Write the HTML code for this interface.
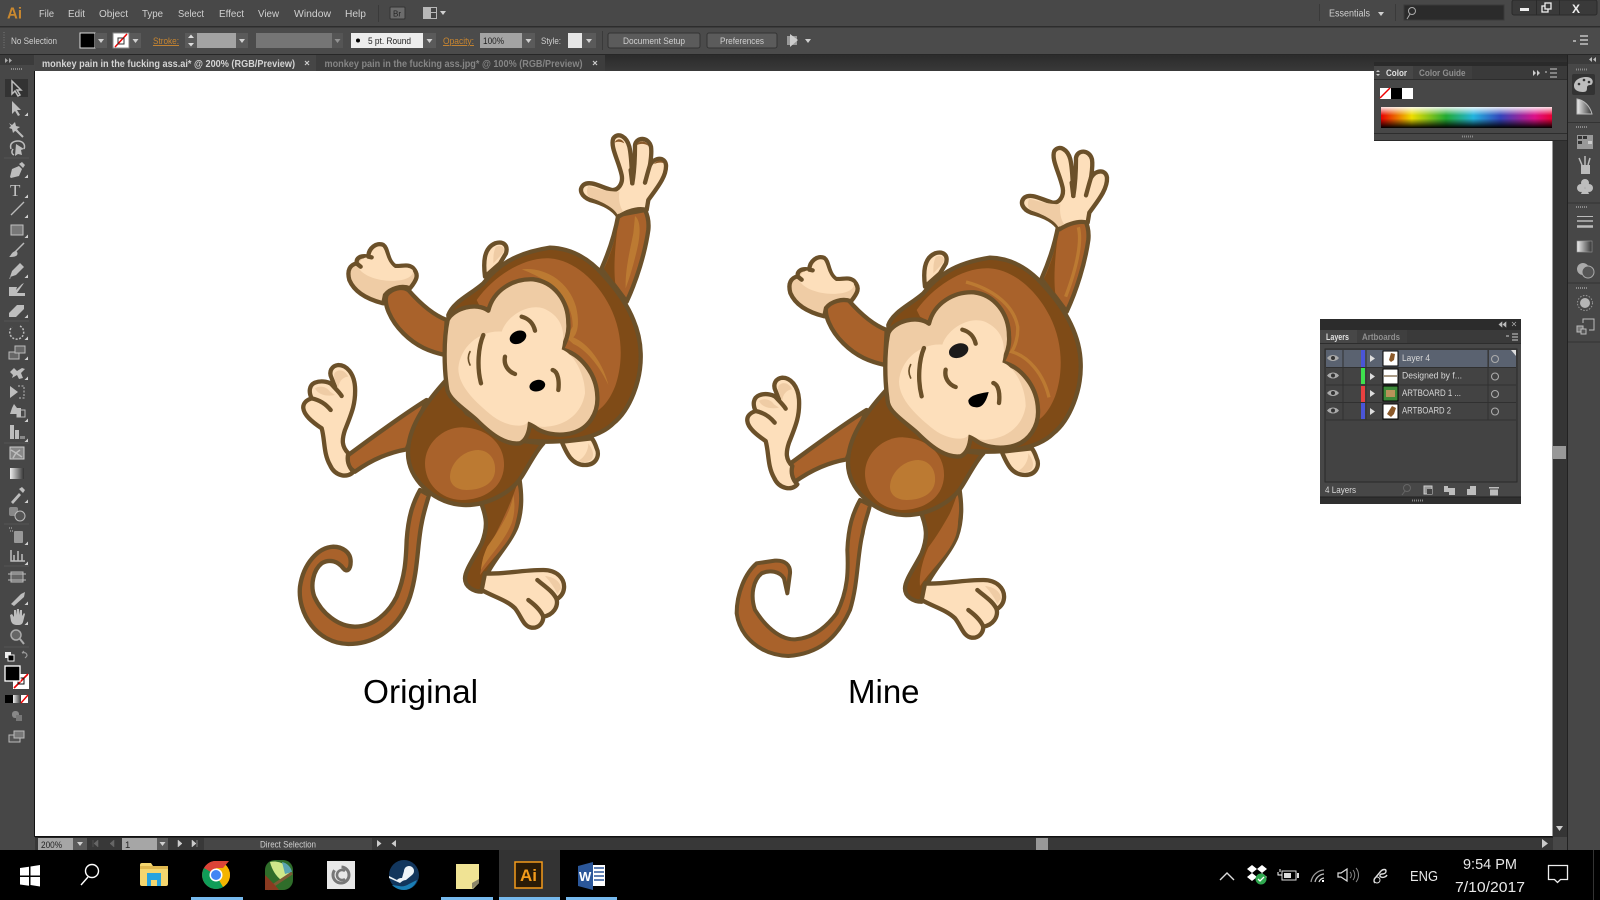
<!DOCTYPE html>
<html lang="en"><head><meta charset="utf-8"><title>Illustrator</title>
<style>
html,body{margin:0;padding:0;background:#000;width:1600px;height:900px;overflow:hidden}
svg{display:block}
text{font-family:"Liberation Sans",sans-serif}
.m{font-size:10.5px;fill:#d0d0d0}
.c{font-size:9.5px;fill:#cfcfcf}
.o{font-size:9.5px;fill:#c98630;text-decoration:underline}
.k{font-size:9.5px;fill:#222}
.l{font-size:9.5px;fill:#d8d8d8}
.i{fill:#bdbdbd}
.s{fill:none;stroke:#bdbdbd;stroke-width:1.5}
.w{font-size:15px;fill:#e8e8e8}
</style></head><body>
<svg width="1600" height="900" viewBox="0 0 1600 900" xmlns="http://www.w3.org/2000/svg">
<defs>
<linearGradient id="sp" x1="0" x2="1" y1="0" y2="0">
<stop offset="0" stop-color="#e80000"/><stop offset=".18" stop-color="#eedd00"/><stop offset=".38" stop-color="#22aa33"/><stop offset=".54" stop-color="#22b4de"/><stop offset=".7" stop-color="#3344bb"/><stop offset=".9" stop-color="#dd1188"/><stop offset="1" stop-color="#e80033"/>
</linearGradient>
<linearGradient id="sv" x1="0" x2="0" y1="0" y2="1">
<stop offset="0" stop-color="#fff" stop-opacity=".9"/><stop offset=".4" stop-color="#fff" stop-opacity="0"/><stop offset=".55" stop-color="#000" stop-opacity="0"/><stop offset="1" stop-color="#000" stop-opacity="1"/>
</linearGradient>
<linearGradient id="gr" x1="0" x2="1" y1="0" y2="0"><stop offset="0" stop-color="#eee"/><stop offset="1" stop-color="#333"/></linearGradient>
<linearGradient id="tb" x1="0" x2="0" y1="0" y2="1"><stop offset="0" stop-color="#2b2b2b"/><stop offset="1" stop-color="#393939"/></linearGradient>
<path id="ct" d="M0 0h-3.5l3.5-3.5z" fill="#d0d0d0"/>
<path id="dd" d="M-3-2h6l-3 4z" fill="#d0d0d0"/>
<g id="grip"><path d="M0 0h12" stroke="#8a8a8a" stroke-width="2" stroke-dasharray="1 1"/></g>

<g id="mback" stroke="#6b5029" stroke-width="13" stroke-linejoin="round" stroke-linecap="round">
 <g transform="translate(0,840)">
  <path fill="#7f4b17" d="M600 300C620 350 625 380 605 430C585 470 555 510 555 535C555 560 580 575 605 575L620 525C640 480 690 430 710 380C728 330 725 280 718 235Z"/>
  <path stroke="none" fill="#a9622b" d="M712 250C690 320 650 400 610 470L600 525C640 470 690 430 705 375C720 320 720 280 712 250Z"/>
  <path fill="#fddfbb" d="M615 520C660 525 720 510 790 510C830 510 855 535 852 565C850 585 835 595 830 598C835 620 820 645 790 650C790 670 775 685 755 683C730 680 725 650 705 625C680 600 640 590 605 570Z"/>
  <path stroke="none" fill="#efcca5" d="M795 528C820 530 842 545 843 565L832 582C822 560 810 545 795 528Z"/>
  <path fill="none" d="M772 540C795 560 820 575 830 598M745 600C765 615 782 630 790 650"/>
  <path fill="#fddfbb" d="M845 125C860 160 875 195 915 195C950 195 960 165 950 145C945 130 940 120 935 115Z"/>
  <path stroke="none" fill="#efcca5" d="M925 130C935 145 945 160 935 178C925 188 905 188 895 182C910 175 925 155 925 130Z"/>
  <path fill="#a9622b" d="M440 0C360 50 280 110 205 165C198 185 205 205 225 215C260 190 310 160 380 148Z"/>
 </g>
 <path fill="#a9622b" d="M1015 285C1005 340 985 400 965 445L1040 545C1070 480 1095 400 1105 330C1108 300 1100 280 1095 270Z"/>
 <path stroke="none" fill="#7f4b17" d="M1016 295C1010 350 990 410 972 446L1006 492C1000 440 1005 380 1016 295Z"/>
 <path fill="#a9622b" d="M320 525C310 550 330 600 370 640C410 680 450 695 495 705L500 600C460 585 420 550 385 510C365 498 335 505 320 525Z"/>
 <path fill="#fddfbb" d="M615 470C610 430 610 385 645 370C670 362 685 375 678 400L660 430Z"/>
 <path stroke="none" fill="#efcca5" d="M648 380C665 374 676 382 670 398L640 430C640 410 640 395 648 380Z"/>
 <g transform="translate(0,840)">
  <path fill="#7f4b17" d="M497 -58C440 5 375 90 385 175C395 250 470 310 550 315C630 318 700 270 725 230C750 190 770 150 790 130L700 120L560 40Z"/>
  <path stroke="none" fill="#a9622b" d="M435 190C435 130 490 80 550 82C620 85 675 130 672 200C668 265 610 300 545 300C480 298 435 250 435 190Z"/>
  <path stroke="none" fill="#bc7a32" d="M510 230C510 190 550 150 595 150C630 152 648 180 645 215C640 255 600 270 560 270C530 270 510 255 510 230Z"/>
 </g>
 <path fill="#7f4b17" d="M505 585C520 545 570 525 610 490C650 440 700 400 810 383C880 385 930 420 970 465C1030 530 1080 610 1082 700C1085 780 1050 870 1000 910C960 950 890 965 800 965L700 960L520 800Z"/>
 <path stroke="none" fill="#a9622b" d="M590 540C640 470 730 410 810 415C880 420 950 480 990 560C1030 640 1030 730 1005 800C985 850 960 870 940 880L850 690L600 560Z"/>
</g>

<g id="hRaised" stroke="#6b5029" stroke-width="13" stroke-linejoin="round" stroke-linecap="round">
 <path fill="#fddfbb" d="M1015 290C1000 265 970 250 930 240C905 230 895 210 910 195C930 180 960 200 995 210C1015 212 1030 190 1025 165C1015 120 990 80 1000 55C1015 35 1040 50 1048 80C1055 110 1055 150 1057 190C1062 160 1065 110 1065 75C1070 50 1105 50 1113 80C1116 100 1112 120 1110 135C1125 110 1155 110 1158 135C1160 170 1130 205 1105 240L1100 270C1070 262 1040 275 1015 290Z"/>
 <path stroke="none" fill="#efcca5" d="M925 198C950 205 980 215 1018 215C1015 240 1020 262 1030 275L1012 283C1000 262 965 245 930 233C920 225 918 212 925 198Z"/>
 <path fill="none" d="M1057 190L1052 150M1095 188C1100 170 1105 150 1110 135"/>
</g>
<g id="hLower" stroke="#6b5029" stroke-width="13" stroke-linejoin="round" stroke-linecap="round">
 <path fill="#fddfbb" d="M205 1000C185 980 185 960 195 930C215 880 228 850 225 800C222 760 200 735 175 735C155 737 145 755 155 775L165 800C150 785 125 780 105 788C88 795 85 815 95 835C80 840 68 850 70 865C72 885 95 905 125 925C135 960 130 1000 150 1035C165 1070 205 1075 220 1055C205 1040 200 1020 205 1000Z"/>
 <path stroke="none" fill="#efcca5" d="M163 760C175 745 195 750 205 770C190 770 175 785 175 805C168 790 160 775 163 760ZM105 805C120 795 140 800 150 815L165 825C140 830 115 825 105 805Z"/>
 <path fill="none" d="M152 790C165 805 178 816 185 828M95 835C120 840 140 855 152 870"/>
</g>
<g id="hUpper" stroke="#6b5029" stroke-width="13" stroke-linejoin="round" stroke-linecap="round">
 <path fill="#efcca5" d="M310 550C270 540 225 520 208 480C200 450 210 435 230 430C228 415 240 405 265 410C265 385 290 365 310 375C325 385 320 420 345 438C365 440 385 430 400 445C418 465 410 480 390 505C365 495 330 505 315 525Z"/>
 <path stroke="none" fill="#fddfbb" d="M236 444C250 470 310 490 365 480C390 475 402 462 398 450C385 438 365 445 345 444C318 425 320 395 308 381C290 375 272 390 272 412C250 410 236 420 236 444Z"/>
 <path fill="none" d="M232 432L242 440M265 410L275 412"/>
</g>

<g id="mfront" stroke="#6b5029" stroke-width="13" stroke-linejoin="round" stroke-linecap="round">
 <path fill="#efcca5" d="M625 572C640 510 700 475 760 478C820 485 865 540 865 610C868 640 855 670 845 688C900 700 950 760 952 830C955 880 925 925 880 938C840 950 780 945 750 908C748 935 740 960 720 970C680 975 640 950 590 900C550 865 510 840 502 810C492 750 490 660 503 600C520 565 590 545 625 572Z"/>
 <path stroke="none" fill="#fddfbb" d="M535 745C540 680 600 630 665 635C680 590 740 550 790 565C840 585 860 630 845 688C880 700 915 760 915 820C905 880 860 915 800 920C770 925 755 905 744 905C735 925 680 920 640 890C590 850 535 800 535 745Z"/>
 <path fill="none" d="M725 590C745 595 760 610 765 632M610 645C595 680 590 740 603 790M675 710C670 735 685 755 705 762M818 750C835 755 838 785 835 810"/>
 <path fill="none" stroke-width="5" d="M570 695C562 710 565 725 570 735"/>
</g>
</defs>

<!-- base chrome -->
<rect width="1600" height="850" fill="#474747"/>
<rect x="0" y="0" width="1600" height="26" fill="#484848"/>
<rect x="0" y="26" width="1600" height="1.5" fill="#2d2d2d"/>
<rect x="0" y="27.5" width="1600" height="26.5" fill="#4b4b4b"/>
<rect x="0" y="54" width="1600" height="1" fill="#272727"/>
<rect x="35" y="55" width="1533" height="16" fill="url(#tb)"/>
<rect x="0" y="55" width="34" height="10" fill="#3b3b3b"/>
<rect x="1568" y="55" width="32" height="10" fill="#3b3b3b"/>

<!-- menu -->
<text x="7" y="18.500" textLength="15" lengthAdjust="spacingAndGlyphs" style="font-size:16px;font-weight:bold;fill:#c9882f">Ai</text>
<g class="m">
<text class="m" x="39" y="17" textLength="15" lengthAdjust="spacingAndGlyphs">File</text>
<text class="m" x="68" y="17" textLength="17" lengthAdjust="spacingAndGlyphs">Edit</text>
<text class="m" x="99" y="17" textLength="29" lengthAdjust="spacingAndGlyphs">Object</text>
<text class="m" x="142" y="17" textLength="21" lengthAdjust="spacingAndGlyphs">Type</text>
<text class="m" x="178" y="17" textLength="26" lengthAdjust="spacingAndGlyphs">Select</text>
<text class="m" x="219" y="17" textLength="25" lengthAdjust="spacingAndGlyphs">Effect</text>
<text class="m" x="258" y="17" textLength="21" lengthAdjust="spacingAndGlyphs">View</text>
<text class="m" x="294" y="17" textLength="37" lengthAdjust="spacingAndGlyphs">Window</text>
<text class="m" x="345" y="17" textLength="21" lengthAdjust="spacingAndGlyphs">Help</text>
</g>
<rect x="378" y="5" width="1" height="17" fill="#3a3a3a"/>
<rect x="390" y="7" width="15" height="12" rx="1" fill="#6c6c6c" stroke="#333"/><text x="393" y="16.500" style="font-size:8px;fill:#222">Br</text>
<rect x="423" y="7" width="14" height="12" fill="#b8b8b8"/><rect x="431" y="8" width="5" height="4" fill="#444"/><rect x="431" y="13" width="5" height="5" fill="#444"/><use href="#dd" x="443" y="13"/>
<rect x="1319" y="4" width="1" height="17" fill="#3a3a3a"/><text class="m" x="1329" y="16.500" textLength="41" lengthAdjust="spacingAndGlyphs">Essentials</text><use href="#dd" x="1381" y="14"/><rect x="1395" y="4" width="1" height="17" fill="#3a3a3a"/>
<rect x="1404" y="5" width="100" height="15" fill="#2b2b2b" stroke="#3a3a3a"/>
<circle cx="1412" cy="11" r="3.500" fill="none" stroke="#aaa"/><path d="M1410 14l-3 5" stroke="#aaa"/>
<rect x="1512" y="0" width="85" height="15" rx="2" fill="#3a3a3a" stroke="#2a2a2a"/>
<rect x="1536" y="0" width="1" height="15" fill="#2a2a2a"/><rect x="1559" y="0" width="1" height="15" fill="#2a2a2a"/>
<rect x="1520" y="8" width="9" height="3" fill="#eee"/>
<rect x="1542" y="6" width="6" height="6" fill="none" stroke="#eee" stroke-width="1.300"/><rect x="1545" y="3" width="6" height="6" fill="#3a3a3a" stroke="#eee" stroke-width="1.300"/>
<text x="1572" y="13" style="font-size:12px;font-weight:bold;fill:#eee">X</text>

<!-- control bar -->
<path d="M4 32v16" stroke="#777" stroke-dasharray="1 1.500"/>
<text class="c" x="11" y="44" textLength="46" lengthAdjust="spacingAndGlyphs">No Selection</text>
<rect x="80" y="33" width="15" height="15" fill="#000" stroke="#ddd"/>
<rect x="95" y="33" width="12" height="15" fill="#5a5a5a"/><use href="#dd" x="101" y="41"/>
<rect x="113" y="33" width="16" height="15" fill="#fff" stroke="#888"/><path d="M115 47l12-13" stroke="#e00" stroke-width="1.500"/><rect x="118" y="38" width="6" height="6" fill="none" stroke="#333"/>
<rect x="130" y="33" width="11" height="15" fill="#5a5a5a"/><use href="#dd" x="135.500" y="41"/>
<text class="o" x="153" y="44" textLength="26" lengthAdjust="spacingAndGlyphs">Stroke:</text>
<rect x="185" y="33" width="12" height="15" fill="#5a5a5a"/><path d="M191 34.500l-3 3.500h6zM191 46.500l-3-3.500h6z" fill="#ddd"/>
<rect x="197" y="33" width="39" height="15" fill="#a3a3a3"/><rect x="236" y="33" width="12" height="15" fill="#5a5a5a"/><use href="#dd" x="242" y="41"/>
<rect x="256" y="33" width="76" height="15" fill="#757575"/><rect x="332" y="33" width="11" height="15" fill="#555"/><use href="#dd" x="337.500" y="41" opacity=".5"/>
<rect x="351" y="33" width="72" height="15" fill="#ececec"/><circle cx="358" cy="40.500" r="2" fill="#000"/><text class="k" x="368" y="44" textLength="43" lengthAdjust="spacingAndGlyphs">5 pt. Round</text>
<rect x="423" y="33" width="13" height="15" fill="#5a5a5a"/><use href="#dd" x="429.500" y="41"/>
<text class="o" x="443" y="44" textLength="31" lengthAdjust="spacingAndGlyphs">Opacity:</text>
<rect x="480" y="33" width="42" height="15" fill="#a3a3a3"/><text class="k" x="483" y="44" textLength="21" lengthAdjust="spacingAndGlyphs">100%</text>
<rect x="522" y="33" width="13" height="15" fill="#5a5a5a"/><use href="#dd" x="528.500" y="41"/>
<text class="c" x="541" y="44" textLength="20" lengthAdjust="spacingAndGlyphs">Style:</text>
<rect x="568" y="33" width="14" height="15" fill="#e6e6e6"/><rect x="582" y="33" width="14" height="15" fill="#5a5a5a"/><use href="#dd" x="589" y="41"/>
<rect x="602" y="31" width="1" height="19" fill="#3a3a3a"/>
<rect x="608" y="33" width="92" height="15" rx="2" fill="#5b5b5b" stroke="#333"/><text class="c" x="623" y="44" textLength="62" lengthAdjust="spacingAndGlyphs">Document Setup</text>
<rect x="707" y="33" width="70" height="15" rx="2" fill="#5b5b5b" stroke="#333"/><text class="c" x="720" y="44" textLength="44" lengthAdjust="spacingAndGlyphs">Preferences</text>
<rect x="787" y="36" width="10" height="9" fill="#999"/><path d="M790 34l8 6-8 7z" fill="#ccc"/><use href="#dd" x="808" y="41"/>
<path d="M1576 41h-3M1580 36h8M1580 40h8M1580 44h8" stroke="#ddd" stroke-width="1.300"/>

<!-- tabs -->
<rect x="35" y="55" width="281" height="16" fill="#464646"/>
<rect x="316" y="55" width="289" height="16" fill="#3d3d3d"/>
<text x="42" y="67" textLength="253" lengthAdjust="spacingAndGlyphs" style="font-size:10.500px;font-weight:bold;fill:#d4d4d4">monkey pain in the fucking ass.ai* @ 200% (RGB/Preview)</text>
<text x="324.500" y="67" textLength="258" lengthAdjust="spacingAndGlyphs" style="font-size:10.500px;font-weight:bold;fill:#858585">monkey pain in the fucking ass.jpg* @ 100% (RGB/Preview)</text>
<path d="M305 61l4 4m0-4l-4 4M593 61l4 4m0-4l-4 4" stroke="#ccc" stroke-width="1.200"/>
<path d="M5 58l3 2.500-3 2.500zM9 58l3 2.500-3 2.500z" fill="#aaa"/>

<!-- canvas -->
<rect x="34" y="71" width="1" height="766" fill="#111"/>
<rect x="35" y="71" width="1517.500" height="765" fill="#fff"/>
<rect x="35" y="836" width="1518" height="1.500" fill="#111"/>

<!-- monkey 1 -->
<g transform="translate(280,120) scale(.33333)">
 <g transform="translate(0,840)" stroke="#6b5029" stroke-width="13" stroke-linejoin="round">
  <path fill="#a9622b" d="M420 270C398 310 385 350 380 420C378 480 375 530 350 590C325 640 280 680 225 680C175 680 125 640 103 590C90 555 100 510 125 490C150 475 175 485 190 505C200 518 212 510 212 485C212 455 185 440 160 440C115 442 70 490 60 560C52 640 110 730 205 732C290 732 360 680 390 590C415 510 412 430 425 370C430 340 440 310 447 285Z"/>
 </g>
 <use href="#mback"/>
 <use href="#hRaised"/><use href="#hLower"/><use href="#hUpper"/>
 <path fill="#8a5a2a" d="M1004 68C1010 54 1026 54 1033 70C1022 64 1012 64 1004 68ZM1070 76C1076 60 1098 60 1106 78C1094 70 1080 70 1070 76ZM1122 132C1130 120 1146 118 1152 130C1142 126 1132 128 1122 132Z"/>
 <path fill="#bc7a32" d="M1065 288C1080 300 1082 330 1075 370C1065 420 1050 470 1037 505C1035 450 1050 390 1060 340Z"/>
 <path fill="#bc7a32" d="M725 448C790 440 865 480 888 560C900 610 892 640 880 652C925 670 970 730 985 795C960 740 920 690 880 672L858 652L878 620C880 560 840 490 725 448Z"/>
 <path fill="#bc7a32" transform="translate(0,840)" d="M700 285C692 340 650 400 622 440C610 465 605 490 603 510C625 470 670 430 695 370C705 340 705 310 700 285Z"/>
 <use href="#mfront"/>
 <ellipse cx="714" cy="652" rx="26" ry="19" transform="rotate(-25 714 652)" fill="#000"/>
 <ellipse cx="772" cy="797" rx="24" ry="17" transform="rotate(-15 772 797)" fill="#000"/>
</g>

<!-- monkey 2 -->
<g transform="translate(720,130) scale(.33333)">
 <g transform="translate(0,840)" stroke="#6b5029" stroke-width="12" stroke-linejoin="round">
  <path fill="#a9622b" d="M420 270C398 310 385 350 382 420C385 480 385 540 350 610C320 650 280 685 225 688C175 690 130 640 105 600C90 555 100 510 125 490C150 478 180 485 192 505L202 550L210 490C212 465 195 450 165 452L110 460C75 490 50 550 50 610C60 680 120 735 205 738C290 732 350 690 390 600C415 520 412 430 428 370C432 340 445 310 450 285Z"/>
 </g>
 <use href="#mback"/>
 <path fill="#a9622b" transform="translate(0,840)" d="M703 285C680 330 650 380 625 412C612 440 596 490 600 528C640 470 690 430 708 375C718 340 716 305 703 285Z"/>
 <g transform="translate(3,8)"><use href="#hRaised"/></g>
 <g transform="translate(12,8)"><use href="#hLower"/></g>
 <g transform="translate(3,9)"><use href="#hUpper"/></g>
 <path fill="none" stroke="#bc7a32" stroke-width="10" d="M1075 292C1085 330 1075 400 1037 500"/>
 <path fill="none" stroke="#bc7a32" stroke-width="10" d="M738 456C810 475 880 520 893 590C895 620 885 650 875 665C925 680 970 730 987 802"/>
 <g transform="translate(2,9)"><use href="#mfront"/></g>
 <ellipse cx="716" cy="662" rx="30" ry="21" transform="rotate(-20 716 662)" fill="#1c1a1a"/>
 <path d="M745 812C750 795 780 790 806 786C800 810 790 832 770 832C755 832 745 825 745 812Z" fill="#000"/>
</g>

<text x="363" y="703" style="font-size:33.400px;fill:#000">Original</text>
<text x="848" y="703" style="font-size:33px;fill:#000">Mine</text>

<!-- tools -->
<path d="M11 69h12" stroke="#8a8a8a" stroke-width="2" stroke-dasharray="1 1"/>
<rect x="5" y="79" width="23" height="18" fill="#333"/>
<g fill="none" stroke="#555">
<path d="M4 158h25M4 321h25M4 443h25M4 524h25M4 566h25M4 647h25"/>
</g>
<path class="s" d="M12 81v13l3-3 3 5 2-1-3-5h4z"/>
<path class="i" d="M12 101v13l3-3 3 5 2-1-3-5h4z"/><use href="#ct" x="28" y="116"/>
<path class="i" d="M9 123l3 2 3-3 1 4 4 1-3 2 2 3-4-1-2 2-1-4-3-1 2-2z"/><path d="M16 130l7 7" stroke="#bbb" stroke-width="2"/>
<path class="s" d="M11 149c-2-6 3-8 7-8s8 3 6 8"/><path class="i" d="M16 144l8 5-3 1 1 5-4-1-3 2z"/><path d="M13 149c-2 3-1 5 1 6" class="s"/>
<path class="i" d="M10 177l2-8 7-3 3 3-3 7-8 2zM19 164l3-2 3 3-2 3z"/><use href="#ct" x="28" y="178"/>
<text x="10" y="196" style="font-family:'Liberation Serif',serif;font-size:17px;fill:#c4c4c4">T</text><use href="#ct" x="28" y="198"/>
<path d="M11 215l13-13" stroke="#bbb" stroke-width="1.300"/><use href="#ct" x="28" y="218"/>
<rect x="11" y="225" width="12" height="10" fill="#777" stroke="#c0c0c0"/><use href="#ct" x="28" y="238"/>
<path d="M24 243l-9 9" stroke="#bbb" stroke-width="1.500"/><path class="i" d="M16 251c2 1 2 4 0 5-2 1-5 1-7 1 2-1 2-5 7-6z"/>
<path class="i" d="M10 277l2-6 8-8 4 4-8 8zM9 279l2-1-1-1z"/><use href="#ct" x="28" y="278"/>
<path class="i" d="M9 287h8l-1 3 6-6 2-1-7 10h8v3h-16z"/>
<path class="i" d="M9 313l8-8h7v4l-8 8h-7z"/><use href="#ct" x="28" y="318"/>
<path d="M20 326a7 7 0 1 1-8 1" fill="none" stroke="#bbb" stroke-width="1.500" stroke-dasharray="2 1.500"/><use href="#ct" x="28" y="340"/>
<rect x="9" y="352" width="10" height="7" fill="#666" stroke="#bbb"/><rect x="15" y="346" width="10" height="7" fill="#666" stroke="#bbb"/><use href="#ct" x="28" y="360"/>
<path class="i" d="M10 372l4-4 3 3 5-3 3 1-4 4 2 5-4 1-2-4-5 3 1-3z"/><use href="#ct" x="28" y="380"/>
<path class="i" d="M10 386l8 6-8 6z"/><path d="M18 386h6v12h-6" fill="none" stroke="#bbb" stroke-dasharray="2 1.500"/>
<path class="i" d="M14 404l3 4h4v9h-4v-3h-7l2-6z"/><rect x="17" y="410" width="8" height="7" fill="none" stroke="#bbb"/><use href="#ct" x="28" y="422"/>
<path class="i" d="M10 425h4v14h-4zM15 430h4v9h-4z"/><path d="M20 436h5v3h-5z" fill="#888"/><use href="#ct" x="28" y="442"/>
<rect x="10" y="447" width="14" height="12" fill="#888" stroke="#ccc"/><path d="M11 450l5 3 4-3M13 458l3-5 6 4" class="s" stroke-width="1"/>
<rect x="10" y="468" width="14" height="11" fill="url(#gr)"/>
<path class="i" d="M11 502l8-9 2 2-8 9zM19 489l3-2 3 3-2 3z"/><use href="#ct" x="28" y="503"/>
<rect x="9" y="507" width="9" height="9" rx="2" fill="#888"/><circle cx="20" cy="516" r="5" fill="#555" stroke="#bbb"/>
<rect x="14" y="531" width="9" height="12" rx="1" fill="#999"/><path d="M9 528h4M10 531h3" stroke="#bbb" stroke-dasharray="1 1"/><use href="#ct" x="28" y="545"/>
<path d="M11 550v11h14M14 561v-6M18 561v-10M22 561v-7" class="s"/><use href="#ct" x="28" y="565"/>
<rect x="11" y="572" width="12" height="10" fill="#666" stroke="#bbb"/><path d="M8 574h18M8 580h18" stroke="#bbb"/>
<path class="i" d="M11 604l10-10 4-2-1 5-10 9z"/><use href="#ct" x="28" y="605"/>
<path class="i" d="M10 615l2-1 2 3v-7h2v5l1-6h2v6l1-5h2v6l2-3 1 1-2 8c-1 3-3 3-6 3s-5-1-6-4z"/><use href="#ct" x="28" y="625"/>
<circle cx="16" cy="635" r="5" fill="#666" stroke="#aaa" stroke-width="1.500"/><path d="M20 639l4 5" stroke="#aaa" stroke-width="2"/>
<rect x="5" y="652" width="6" height="6" fill="#eee"/><rect x="8" y="655" width="6" height="6" fill="#000" stroke="#eee"/>
<path d="M22 653c3-1 5 0 5 3M22 653l2-2M27 656l-2 2" fill="none" stroke="#999" stroke-width="1.200"/>
<rect x="13" y="674" width="16" height="15" fill="#fff"/><path d="M14 688l14-14" stroke="#e00" stroke-width="1.600"/><rect x="18" y="678" width="6" height="6" fill="none" stroke="#111"/>
<rect x="5" y="666" width="15" height="15" fill="#000" stroke="#fff" stroke-width="1.300"/>
<rect x="5" y="695" width="8" height="8" fill="#000"/><rect x="13" y="695" width="8" height="8" fill="url(#gr)"/><rect x="21" y="695" width="7" height="8" fill="#fff"/><path d="M21 703l7-8" stroke="#e00" stroke-width="1.400"/>
<rect x="12" y="711" width="7" height="7" rx="3" fill="#888"/><rect x="16" y="715" width="6" height="6" fill="#777"/>
<rect x="9" y="735" width="11" height="7" fill="#555" stroke="#bbb"/><rect x="14" y="731" width="10" height="7" fill="#777" stroke="#bbb"/>

<!-- color panel -->
<rect x="1552.500" y="71" width="15.500" height="766" fill="#353535"/>
<rect x="1553" y="446" width="13" height="13" fill="#989898"/>
<path d="M1556 826h7l-3.500 5z" fill="#ccc"/>
<rect x="1374" y="62" width="193" height="78" fill="#474747"/>
<rect x="1374" y="62" width="193" height="4" fill="#2a2a2a"/>
<rect x="1374" y="66" width="193" height="13" fill="#3a3a3a"/>
<rect x="1374" y="66" width="39" height="13" fill="#474747"/><rect x="1413" y="66" width="59" height="13" fill="#3f3f3f"/>
<text x="1386" y="76" textLength="21" lengthAdjust="spacingAndGlyphs" style="font-size:9.500px;font-weight:bold;fill:#e0e0e0">Color</text>
<path d="M1378 70l2 2h-4zM1378 76l2-2h-4z" fill="#ccc"/>
<text x="1419" y="76" textLength="46.500" lengthAdjust="spacingAndGlyphs" style="font-size:9.500px;font-weight:bold;fill:#8f8f8f">Color Guide</text>
<path d="M1533 70l3 3-3 3zM1537 70l3 3-3 3z" fill="#ccc"/><path d="M1547 72h-2M1550 69h7M1550 73h7M1550 77h7" stroke="#ccc"/>
<rect x="1374" y="79" width="193" height="1" fill="#2d2d2d"/>
<rect x="1380" y="88" width="11" height="11" fill="#fff"/><path d="M1380 98l10-10" stroke="#e00" stroke-width="1.500"/>
<rect x="1391" y="88" width="11" height="11" fill="#000"/><rect x="1402" y="88" width="11" height="11" fill="#fff"/>
<rect x="1381" y="107" width="171" height="21" fill="url(#sp)"/><rect x="1381" y="107" width="171" height="21" fill="url(#sv)"/>
<rect x="1374" y="133" width="193" height="1" fill="#2d2d2d"/>
<use href="#grip" x="1462" y="136.500"/>
<rect x="1374" y="140" width="193" height="1" fill="#2a2a2a"/>

<!-- dock -->
<rect x="1567" y="55" width="1" height="795" fill="#222"/>
<rect x="1568" y="55" width="32" height="795" fill="#474747"/>
<rect x="1568" y="55" width="32" height="9" fill="#3b3b3b"/>
<path d="M1592 57l-3 2.500 3 2.500zM1596 57l-3 2.500 3 2.500z" fill="#bbb"/>
<path d="M1568 122.500h32M1568 203h32M1568 283h32M1568 342h32" stroke="#333"/>
<use href="#grip" x="1576" y="69.500"/><use href="#grip" x="1576" y="127"/><use href="#grip" x="1576" y="207"/><use href="#grip" x="1576" y="288"/>
<rect x="1572" y="74" width="23" height="21" rx="2" fill="#333"/>
<path class="i" d="M1574 86c0-6 6-9 12-9s8 4 6 7c-1 2-4 0-5 3 0 3 0 5-4 5-5 0-9-2-9-6z"/>
<circle cx="1579" cy="84" r="1.300" fill="#333"/><circle cx="1584" cy="80" r="1.300" fill="#333"/><circle cx="1589" cy="82" r="1.300" fill="#333"/>
<path d="M1577 99c7 1 13 7 15 15h-15z" fill="url(#gr)" stroke="#bbb"/>
<g fill="#333"><rect x="1577" y="135" width="16" height="14" fill="#999"/><rect x="1578" y="136" width="4" height="3"/><rect x="1583" y="136" width="4" height="3"/><rect x="1578" y="141" width="4" height="3"/><rect x="1588" y="141" width="4" height="3" fill="#ccc"/></g>
<rect x="1581" y="165" width="9" height="9" fill="#bbb"/><path d="M1582 165l-3-7M1585 165v-9M1588 165l2-7" stroke="#bbb" stroke-width="1.500"/>
<circle cx="1585" cy="183" r="4" class="i"/><circle cx="1581" cy="188" r="4" class="i"/><circle cx="1589" cy="188" r="4" class="i"/><path class="i" d="M1583 189h4l2 5h-8z"/>
<path d="M1577 216.500h16" stroke="#bbb" stroke-width="1"/><path d="M1577 221h16" stroke="#bbb" stroke-width="1.500"/><path d="M1577 226.500h16" stroke="#bbb" stroke-width="2.500"/>
<rect x="1577" y="241" width="15" height="11" fill="url(#gr)" stroke="#999" stroke-width=".6"/>
<circle cx="1583" cy="269" r="6" fill="#aaa"/><circle cx="1588" cy="272" r="6" fill="#555" stroke="#aaa"/>
<circle cx="1585" cy="303" r="5" fill="#b5b5b5"/><circle cx="1585" cy="303" r="7.500" fill="none" stroke="#999" stroke-dasharray="1.500 1.500"/>
<path d="M1583 323v-4h11v11h-5" fill="none" stroke="#bbb"/><rect x="1577" y="326" width="6" height="6" fill="#777" stroke="#bbb"/><rect x="1581" y="329" width="5" height="5" fill="#555" stroke="#bbb"/>

<!-- layers panel -->
<rect x="1320" y="319" width="201" height="185" fill="#474747"/>
<rect x="1320" y="319" width="201" height="11" fill="#2c2c2c"/>
<rect x="1320" y="330" width="201" height="13" fill="#3a3a3a"/>
<rect x="1320" y="330" width="37" height="13" fill="#474747"/><rect x="1357" y="330" width="50" height="13" fill="#3f3f3f"/>
<text x="1326" y="340" textLength="23" lengthAdjust="spacingAndGlyphs" style="font-size:9.500px;font-weight:bold;fill:#e0e0e0">Layers</text>
<text x="1362" y="340" textLength="38" lengthAdjust="spacingAndGlyphs" style="font-size:9.500px;font-weight:bold;fill:#8f8f8f">Artboards</text>
<path d="M1502 322l-3 2.500 3 2.500zM1506 322l-3 2.500 3 2.500zM1512 322l4 4m0-4l-4 4" fill="#bbb" stroke="#bbb" stroke-width=".6"/>
<path d="M1509 336h-3M1512 334h6M1512 337h6M1512 340h6" stroke="#ccc"/>
<rect x="1320" y="343" width="201" height="1" fill="#2d2d2d"/>
<rect x="1325" y="349" width="192" height="133" fill="#434343" stroke="#2a2a2a"/>
<rect x="1326" y="350" width="162" height="17" fill="#5a6270"/><rect x="1489" y="350" width="27" height="17" fill="#5a6270"/>
<path d="M1326 367.500h190M1326 385h190M1326 402.500h190M1326 420h190M1343 350v70M1366 350v70M1488 350v70" stroke="#303030"/>
<path d="M1516 350v6l-5-6z" fill="#ddd"/>
<g fill="#4a55d8"><rect x="1361" y="350" width="4" height="17"/><rect x="1361" y="403" width="4" height="16"/></g>
<rect x="1361" y="368" width="4" height="16" fill="#3ee04e"/><rect x="1361" y="386" width="4" height="16" fill="#e84040"/>
<g fill="#aaa">
<path d="M1327 358c3-4 9-4 12 0-3 4-9 4-12 0z"/><path d="M1327 375.500c3-4 9-4 12 0-3 4-9 4-12 0z"/><path d="M1327 393c3-4 9-4 12 0-3 4-9 4-12 0z"/><path d="M1327 410.500c3-4 9-4 12 0-3 4-9 4-12 0z"/>
</g>
<g fill="#333"><circle cx="1333" cy="358" r="2"/><circle cx="1333" cy="375.500" r="2"/><circle cx="1333" cy="393" r="2"/><circle cx="1333" cy="410.500" r="2"/></g>
<path d="M1370 355l5 3.500-5 3.500zM1370 373l5 3.500-5 3.500zM1370 390l5 3.500-5 3.500zM1370 408l5 3.500-5 3.500z" fill="#ddd"/>
<rect x="1383" y="351" width="15" height="15" fill="#fff" stroke="#000"/><path d="M1391 353l4 1-1 6-3 2-2-2z" fill="#8b5a2b"/>
<rect x="1383" y="369" width="15" height="15" fill="#fff" stroke="#000"/><rect x="1384" y="375" width="13" height="2" fill="#a99a85"/>
<rect x="1383" y="386" width="15" height="15" fill="#3d8a3a" stroke="#000"/><rect x="1386" y="390" width="9" height="7" fill="#b8935a"/>
<rect x="1383" y="404" width="15" height="15" fill="#fff" stroke="#000"/><path d="M1387 414l5-8 4 2-2 6-3 3z" fill="#8b5a2b"/>
<text class="l" x="1402" y="361" textLength="28" lengthAdjust="spacingAndGlyphs">Layer 4</text>
<text class="l" x="1402" y="378.500" textLength="60" lengthAdjust="spacingAndGlyphs">Designed by f...</text>
<text class="l" x="1402" y="396" textLength="59" lengthAdjust="spacingAndGlyphs">ARTBOARD 1 ...</text>
<text class="l" x="1402" y="413.500" textLength="49" lengthAdjust="spacingAndGlyphs">ARTBOARD 2</text>
<g fill="none" stroke="#aaa" stroke-width="1.100"><circle cx="1495" cy="359" r="3.500"/><circle cx="1495" cy="376.500" r="3.500"/><circle cx="1495" cy="394" r="3.500"/><circle cx="1495" cy="411.500" r="3.500"/></g>
<text class="l" x="1325" y="493" textLength="31" lengthAdjust="spacingAndGlyphs">4 Layers</text>
<circle cx="1407" cy="488" r="3.500" fill="none" stroke="#666"/><path d="M1405 491l-3 4" stroke="#666"/>
<rect x="1424" y="486" width="8" height="8" fill="#999" stroke="#ccc"/><rect x="1427" y="489" width="5" height="5" fill="#444"/>
<path class="i" d="M1444 486h4v2h7v7h-6v-3h-5z"/><rect x="1467" y="486" width="9" height="9" class="i"/><rect x="1467" y="486" width="3" height="3" fill="#474747"/>
<path class="i" d="M1489 487h10v1.500h-10zM1490 489.500h8v6h-8z"/>
<rect x="1320" y="497" width="201" height="7" fill="#2f2f2f"/><use href="#grip" x="1412" y="500.500"/>
<rect x="1320" y="496.500" width="201" height="1" fill="#222"/>

<!-- status bar -->
<rect x="35" y="837.500" width="1518" height="12.500" fill="#383838"/>
<rect x="38" y="838" width="35" height="12" fill="#a6a6a6"/><text class="k" x="41" y="848" textLength="21" lengthAdjust="spacingAndGlyphs">200%</text>
<rect x="73" y="838" width="14" height="12" fill="#5a5a5a"/><use href="#dd" x="80" y="844"/>
<path d="M93 840v7M98 840l-4 3.500 4 3.500zM114 840l-4 3.500 4 3.500z" fill="#666" stroke="#666" stroke-width=".5"/>
<rect x="122" y="838" width="35" height="12" fill="#a6a6a6"/><text class="k" x="125" y="848">1</text>
<rect x="157" y="838" width="11" height="12" fill="#5a5a5a"/><use href="#dd" x="162.500" y="844"/>
<path d="M178 840l4 3.500-4 3.500zM192 840l4 3.500-4 3.500zM197 840v7" fill="#ccc" stroke="#ccc" stroke-width=".5"/>
<rect x="204" y="838" width="168" height="12" fill="#464646"/><text class="c" x="260" y="847.500" textLength="56" lengthAdjust="spacingAndGlyphs">Direct Selection</text>
<path d="M377 840l4.500 3.500-4.500 3.500zM396 840l-4.500 3.500 4.500 3.500z" fill="#ccc"/>
<rect x="1036" y="838" width="12" height="12" fill="#989898"/>
<path d="M1542 839l6 4.500-6 4.500z" fill="#ccc"/>
<rect x="1553" y="837" width="14" height="13" fill="#474747"/>

<!-- taskbar -->
<rect x="0" y="850" width="1600" height="50" fill="#000"/>
<rect x="499" y="850" width="61" height="50" fill="#333"/>
<rect x="191" y="897" width="52" height="3" fill="#76b9ed"/><rect x="441" y="897" width="52" height="3" fill="#76b9ed"/><rect x="499" y="897" width="61" height="3" fill="#76b9ed"/><rect x="566" y="897" width="51" height="3" fill="#76b9ed"/>
<path d="M20 868l9-1.300v8.800h-9zM30.500 866.500l9.500-1.500v10.500h-9.500zM20 877h9v8.800l-9-1.300zM30.500 877h9.500v9.500l-9.500-1.500z" fill="#fff"/>
<circle cx="92" cy="871" r="6.500" fill="none" stroke="#fff" stroke-width="1.400"/><path d="M88 877l-7 8" stroke="#fff" stroke-width="1.400"/>
<path d="M140 865a2 2 0 0 1 2-2h9l2 3h13a2 2 0 0 1 2 2v16a2 2 0 0 1-2 2h-24a2 2 0 0 1-2-2z" fill="#f4d66f"/><rect x="140" y="866" width="28" height="3" fill="#e0b84f"/><path d="M147 873h14v13h-4v-6h-6v6h-4z" fill="#27a3e0"/>
<circle cx="216" cy="875" r="14" fill="#db4437"/><path d="M216 875l12 7a14 14 0 0 1-12 7 14 14 0 0 1-12-21z" fill="#0f9d58"/><path d="M216 861a14 14 0 0 1 14 14 14 14 0 0 1-7 12l-7-12z" fill="#f4b400"/><path d="M204 868c4-6 8-7 12-7h13l-6 7z" fill="#db4437"/><circle cx="216" cy="875" r="6.500" fill="#fff"/><circle cx="216" cy="875" r="5" fill="#4285f4"/>
<rect x="265" y="860" width="28" height="30" rx="10" fill="#2f6d2a"/><path d="M270 862c8-2 18 2 21 12l-10 6c-5-4-9-10-11-18z" fill="#cfe88a"/><path d="M282 862c5 1 9 5 10 10l-7 2z" fill="#5aa5b0"/><path d="M268 889l24-16" stroke="#7d5a34" stroke-width="3"/><path d="M265 875c6 6 10 10 14 15h-14z" fill="#8a3a20"/>
<rect x="327" y="861" width="28" height="28" fill="#e8e8e8"/><circle cx="341" cy="875" r="8" fill="none" stroke="#777" stroke-width="3" stroke-dasharray="30 8"/><path d="M345 871a5 5 0 1 0 0 8" fill="none" stroke="#777" stroke-width="2.500"/>
<ellipse cx="404" cy="875" rx="15" ry="15" fill="#12365d"/><path d="M389 878l11 5c2-2 4-3 6-3l6-5a5 5 0 1 0-8-4l-2 7c-3 0-4 1-5 2l-8-4z" fill="#eef3f7"/><path d="M392 885c3 3 7 5 12 5 6 0 11-4 13-10l-8 4c-3 2-7 3-10 2z" fill="#1a7eb5"/>
<path d="M456 864h23v19l-6 6h-17z" fill="#f0e394"/><path d="M479 879v4l-7 6v-6z" fill="#8a8468"/>
<rect x="515" y="862" width="27" height="26" fill="#2a1b07" stroke="#f49b1b" stroke-width="1.500"/><text x="520" y="881" style="font-size:17px;font-weight:bold;fill:#f49b1b">Ai</text>
<rect x="585" y="865" width="20" height="21" fill="#fff"/><path d="M594 868h10M594 872h10M594 876h10M594 880h10" stroke="#2b579a" stroke-width="1.500"/><path d="M578 866l15-4v28l-15-4z" fill="#2b579a"/><text x="579" y="881" style="font-size:13px;font-weight:bold;fill:#fff">W</text>

<path d="M1220 880l7-7 7 7" fill="none" stroke="#ddd" stroke-width="1.400"/>
<path d="M1247 869l5-4 5 4-5 4zM1257 869l5-4 5 4-5 4zM1247 877l5-4 5 4-5 4zM1257 877l5-4 5 4-5 4z" fill="#fff"/>
<circle cx="1261" cy="879" r="5.500" fill="#2fa84f"/><path d="M1258 879l2 2 4-4" fill="none" stroke="#fff" stroke-width="1.300"/>
<rect x="1282" y="871" width="14" height="9" fill="none" stroke="#ddd"/><rect x="1284" y="873" width="7" height="5" fill="#ddd"/><rect x="1297" y="873" width="2" height="5" fill="#ddd"/>
<path d="M1278 872v3h4M1280 869v3" fill="none" stroke="#fff"/>
<path d="M1311 882a14 14 0 0 1 13-12" fill="none" stroke="#999" stroke-width="1.300"/><path d="M1315 882a10 10 0 0 1 9-8" fill="none" stroke="#bbb" stroke-width="1.300"/><path d="M1319 882a6 6 0 0 1 5-4" fill="none" stroke="#ddd" stroke-width="1.300"/><rect x="1322" y="880" width="2" height="2" fill="#fff"/>
<path d="M1338 873h3l6-4v12l-6-4h-3z" fill="none" stroke="#ddd" stroke-width="1.200"/><path d="M1350 872a4 4 0 0 1 0 6M1353 870a8 8 0 0 1 0 10M1356 868a11 11 0 0 1 0 14" fill="none" stroke="#888"/>
<path d="M1375 883c-2-2-1-4 1-6l5-6c2-2 5-2 5 0s-2 3-4 3-3 2-1 3 5 0 6-2" fill="none" stroke="#ddd" stroke-width="1.400"/><circle cx="1377" cy="880" r="3" fill="none" stroke="#ddd"/>
<text x="1410" y="881" textLength="28" lengthAdjust="spacingAndGlyphs" style="font-size:14.500px;fill:#e8e8e8">ENG</text>
<text class="w" x="1463" y="869" textLength="54" lengthAdjust="spacingAndGlyphs">9:54 PM</text>
<text class="w" x="1455" y="892" textLength="70" lengthAdjust="spacingAndGlyphs">7/10/2017</text>
<path d="M1548.500 865.500h19v14h-7l-3 3-3-3h-6z" fill="none" stroke="#eee" stroke-width="1.300"/>
<rect x="1593" y="850" width="1" height="50" fill="#333"/>
</svg>
</body></html>
